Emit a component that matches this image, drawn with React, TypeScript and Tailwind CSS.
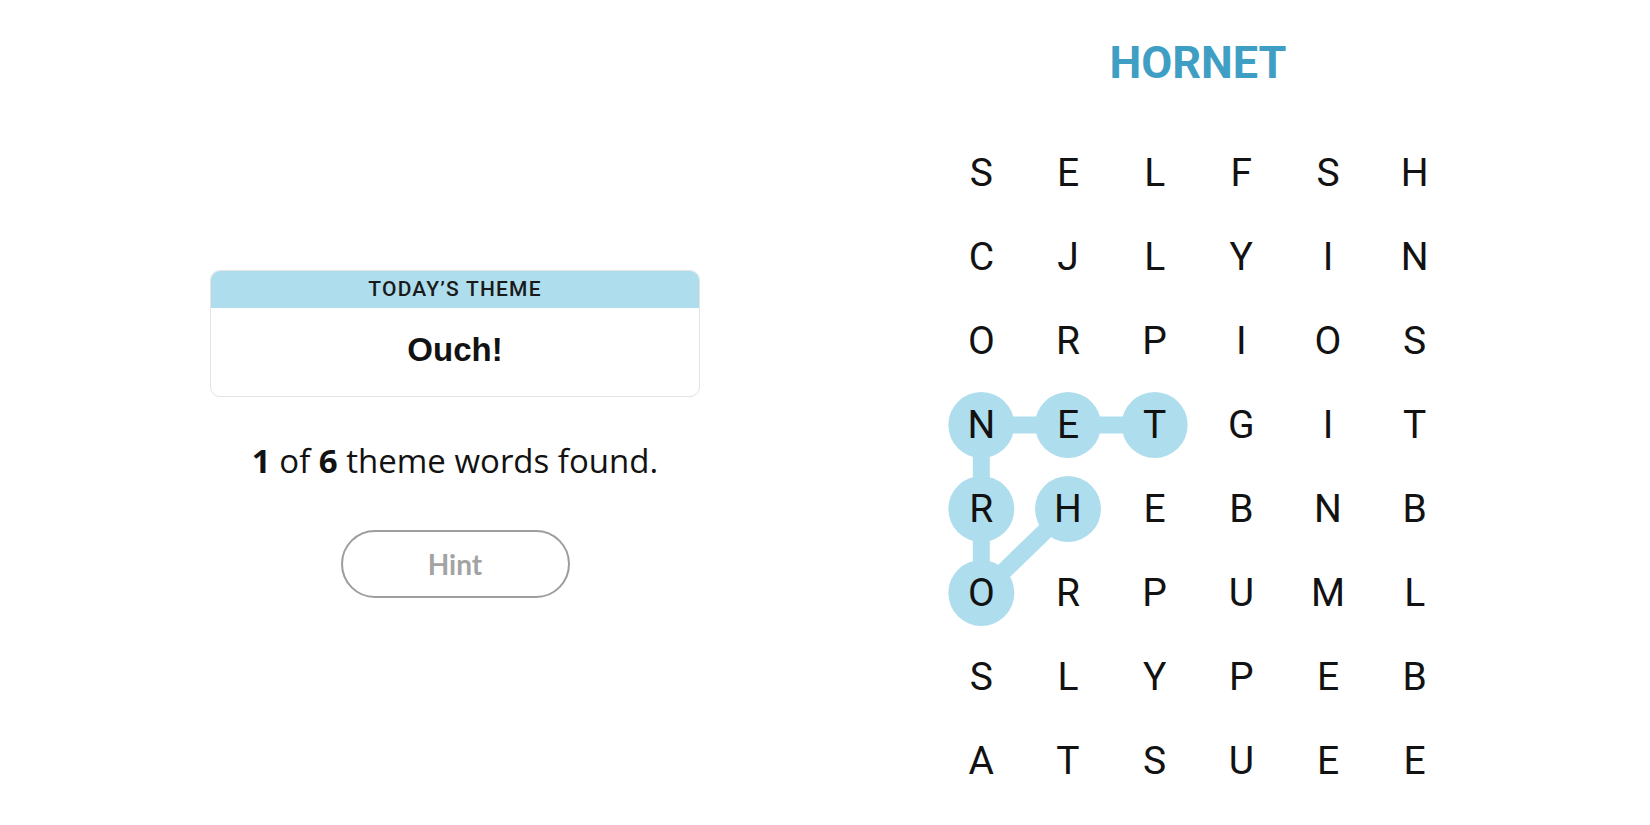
import React from 'react';

// Strands-style board: theme card on the left, letter grid on the right
const rows = [
  'SELFSH',
  'CJLYIN',
  'ORPIOS',
  'NETGIT',
  'RHEBNB',
  'ORPUML',
  'SLYPEB',
  'ATSUEE',
];

const CELL_W = 520 / 6;
const CELL_H = 84;

// path of the word being spelled: H-O-R-N-E-T as [row, col]
const path: [number, number][] = [
  [4, 1],
  [5, 0],
  [4, 0],
  [3, 0],
  [3, 1],
  [3, 2],
];

const cx = (c: number) => CELL_W / 2 + CELL_W * c;
const cy = (r: number) => CELL_H / 2 + CELL_H * r;

function Board() {
  const points = path.map(([r, c]) => `${cx(c)},${cy(r)}`).join(' ');
  return (
    <div className="relative w-[520px]">
      {/* selection highlight */}
      <svg className="absolute inset-0" width="520" height={CELL_H * 8}>
        <polyline points={points} fill="none" stroke="#aedeed" strokeWidth="17" strokeLinejoin="round" />
        {path.map(([r, c]) => (
          <circle key={`${r}-${c}`} cx={cx(c)} cy={cy(r)} r="33" fill="#aedeed" />
        ))}
      </svg>
      <div className="relative grid grid-cols-6">
        {rows.map((row, r) =>
          row.split('').map((ch, c) => (
            <div
              key={`${r}-${c}`}
              className="h-[84px] flex items-center justify-center text-[39px] leading-none text-[#121212] font-['Roboto',sans-serif]"
            >
              {ch}
            </div>
          ))
        )}
      </div>
    </div>
  );
}

export default function App() {
  return (
    <div className="w-[1650px] h-[825px] bg-white flex overflow-hidden">
      {/* left: theme + progress */}
      <div className="w-[910px] flex flex-col items-center pt-[270px]">
        <div className="w-[490px] rounded-[10px] border border-[#e3e3e3] overflow-hidden">
          <div className="h-[37px] bg-[#aedeed] flex items-center justify-center text-[21px] tracking-[1.2px] font-medium text-[#1a1a1a] font-['Roboto',sans-serif]">
            TODAY’S THEME
          </div>
          <div className="h-[88px] pb-[4px] flex items-center justify-center text-[33px] font-bold text-[#121212] font-['Liberation_Sans',sans-serif]">
            Ouch!
          </div>
        </div>

        <p className="mt-[44px] text-[33px] leading-[40px] text-[#121212] font-['Open_Sans',sans-serif]">
          <span className="font-bold">1</span> of <span className="font-bold">6</span> theme words found.
        </p>

        <button className="mt-[49px] w-[229px] h-[68px] rounded-full border-2 border-[#9d9d9d] text-[28px] font-bold text-[#a3a3a3] font-['Lato',sans-serif]">
          Hint
        </button>
      </div>

      {/* right: spangram + grid */}
      <div className="flex flex-col pl-[28px]">
        <h1 className="w-[520px] pt-[40px] text-center text-[45px] leading-none font-bold text-[#3e9ec3] font-['Roboto',sans-serif]">
          HORNET
        </h1>
        <div className="mt-[46px]">
          <Board />
        </div>
      </div>
    </div>
  );
}
